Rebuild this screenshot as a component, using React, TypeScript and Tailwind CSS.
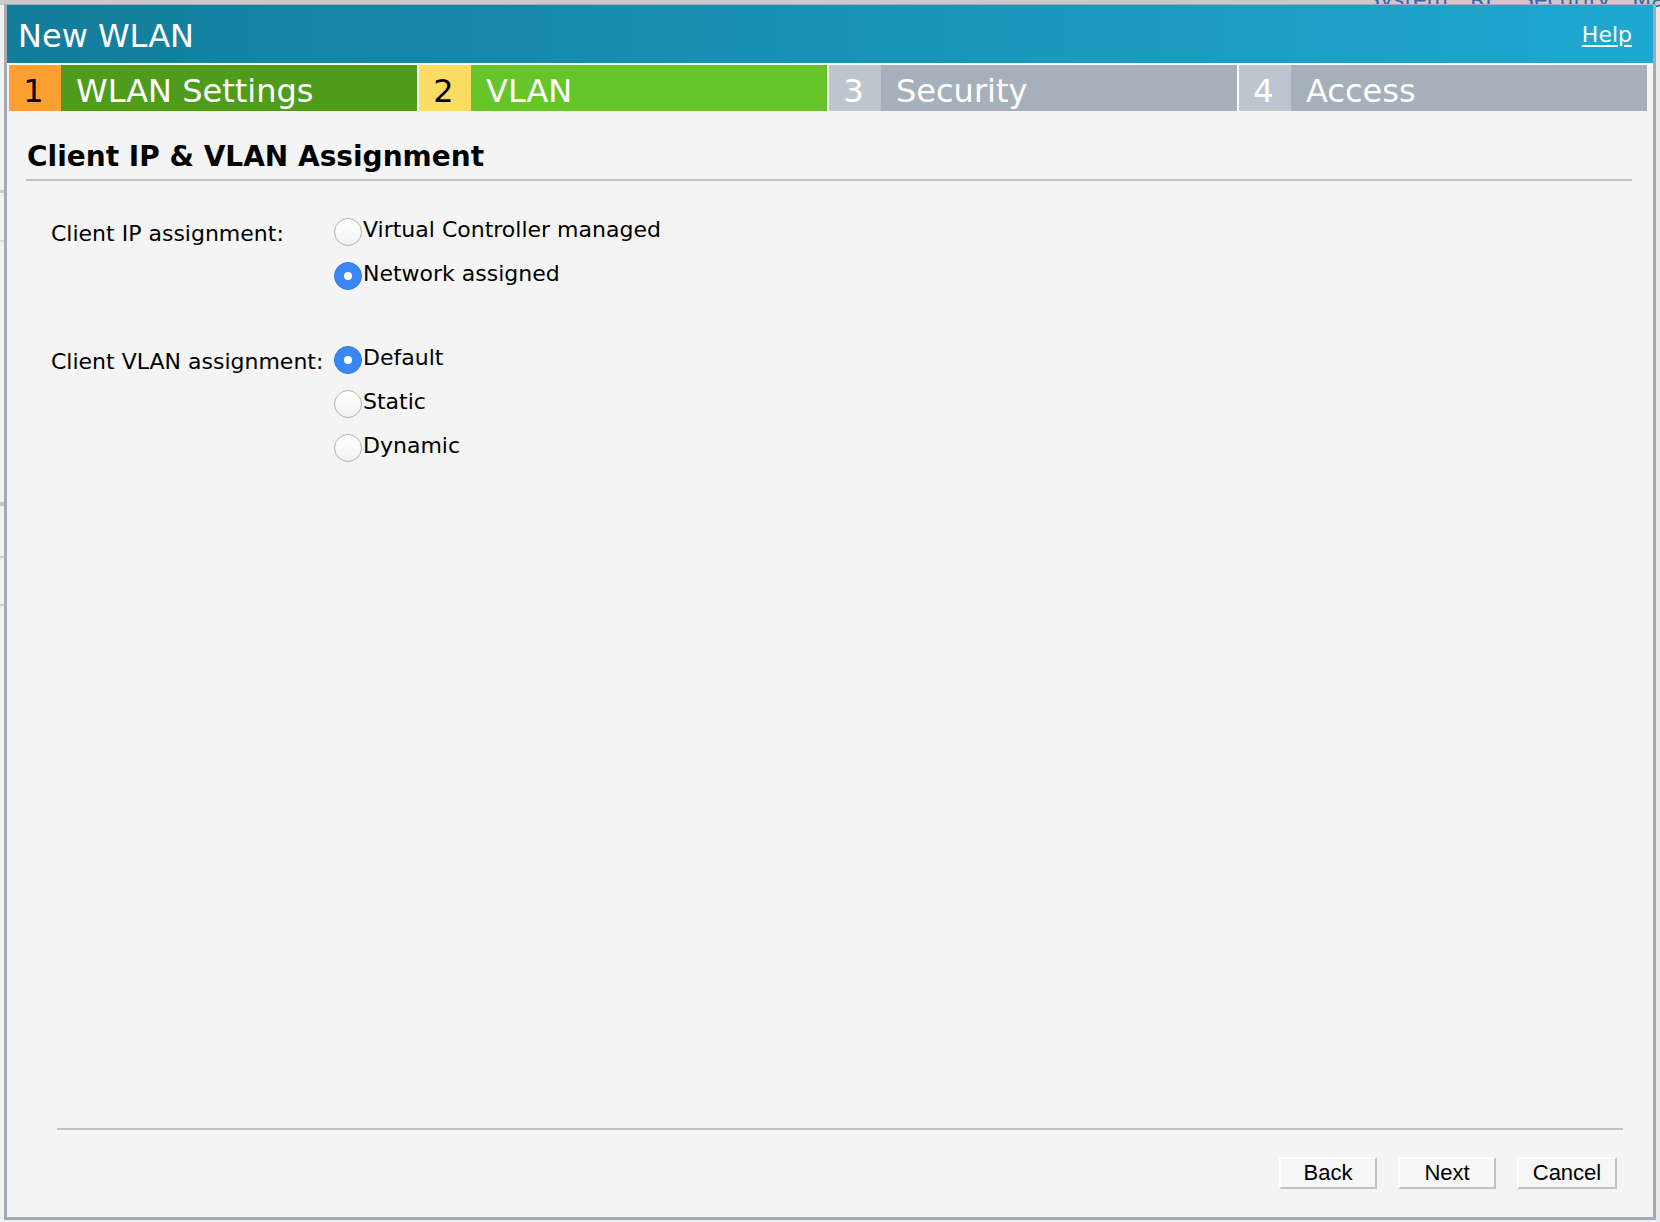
import React from 'react';

const tabs = [
  { n: '1', label: 'WLAN Settings', num: 'bg-[#fe9f31] text-black', body: 'bg-[#4f9b1c] text-white' },
  { n: '2', label: 'VLAN', num: 'bg-[#fddd61] text-black', body: 'bg-[#66c528] text-white' },
  { n: '3', label: 'Security', num: 'bg-[#bdc6cf] text-white', body: 'bg-[#a6b0bb] text-white' },
  { n: '4', label: 'Access', num: 'bg-[#bdc6cf] text-white', body: 'bg-[#a6b0bb] text-white' },
];

const Radio: React.FC<{ checked?: boolean; label: string }> = ({ checked, label }) => (
  <div className="flex h-[44px] items-center">
    {checked ? (
      <span className="flex h-[28px] w-[28px] items-center justify-center rounded-full bg-[#3a87f6] border border-[#3079e8]">
        <span className="h-[8px] w-[8px] rounded-full bg-white" />
      </span>
    ) : (
      <span className="h-[28px] w-[28px] rounded-full border border-[#b3b3b3] bg-linear-to-b from-white to-[#f2f2f2]" />
    )}
    <span className="ml-[1px] mb-[4px] text-[22px] leading-none text-black">{label}</span>
  </div>
);

const Field: React.FC<{ label: string; children: React.ReactNode; className?: string }> = ({ label, children, className }) => (
  <div className={`flex ${className ?? ''}`}>
    <div className="flex h-[44px] w-[283px] items-center pt-[3px] text-[22px] text-black">{label}</div>
    <div className="flex flex-col">{children}</div>
  </div>
);

const Button: React.FC<{ children: React.ReactNode; wide?: boolean }> = ({ children, wide }) => (
  <button
    className={`${wide ? 'w-[100px]' : 'w-[98px]'} h-[32px] bg-[#f6f6f6] border-2 border-t-white border-l-white border-r-[#c2c2c2] border-b-[#c2c2c2] font-['Liberation_Sans',Arial,sans-serif] text-[22px] leading-none text-black`}
  >
    {children}
  </button>
);

export default function App() {
  return (
    <div className="relative h-[1222px] w-[1660px] overflow-hidden bg-[#ececec] font-['DejaVu_Sans',sans-serif]">
      {/* page behind the dialog */}
      <div className="absolute top-0 left-0 right-0 h-[5px] bg-[#cacaca]" />
      <div className="absolute top-[-17px] left-[1366px] flex gap-[22px] text-[22px] text-[#2c6fa7] whitespace-nowrap">
        <span>System</span>
        <span>RF</span>
        <span>Security</span>
        <span>Maintenance</span>
      </div>
      <div className="absolute left-0 top-[5px] bottom-0 w-[4px] bg-[#f2f2f2]">
        <div className="mt-[185px] h-[3px] bg-[#c9c9c9]" />
        <div className="mt-[47px] h-[2px] bg-[#d6d6d6]" />
        <div className="mt-[260px] h-[4px] bg-[#c4c4c4]" />
        <div className="mt-[50px] h-[2px] bg-[#d0d0d0]" />
        <div className="mt-[46px] h-[2px] bg-[#d0d0d0]" />
      </div>

      {/* dialog */}
      <div className="absolute left-[4px] top-[4px] flex h-[1216px] w-[1652px] flex-col border-x-[3px] border-b-[3px] border-t border-[#a3acb5] bg-[#f4f4f4]">
        <div className="flex h-[58px] items-center justify-between bg-linear-to-r from-[#137c9b] to-[#1fa8d1] pl-[11px] pr-[21px] text-white">
          <span className="pt-[4px] text-[32px] leading-none">New WLAN</span>
          <a className="pt-[2px] text-[22px] leading-none underline underline-offset-[3px]">Help</a>
        </div>

        <div className="border-t-2 border-white pl-[2px]">
          <div className="flex h-[46px] w-fit gap-[2px] bg-white">
            {tabs.map((t) => (
              <div key={t.n} className="flex w-[408px]">
                <div className={`flex w-[52px] items-center justify-center pt-[5px] pr-[3px] text-[32px] leading-none ${t.num}`}>{t.n}</div>
                <div className={`flex flex-1 items-center pl-[15px] pt-[5px] text-[32px] leading-none ${t.body}`}>{t.label}</div>
              </div>
            ))}
          </div>
        </div>

        <div className="flex-1">
          <h2 className="mt-[27px] ml-[19px] mr-[21px] border-b-2 border-[#b9c3cd] pb-[4px] pl-[1px] text-[28px] font-bold leading-[37px] text-black">
            Client IP &amp; VLAN Assignment
          </h2>

          <div className="mt-[29px] pl-[44px]">
            <Field label="Client IP assignment:">
              <Radio label="Virtual Controller managed" />
              <Radio checked label="Network assigned" />
            </Field>
            <Field label="Client VLAN assignment:" className="mt-[40px]">
              <Radio checked label="Default" />
              <Radio label="Static" />
              <Radio label="Dynamic" />
            </Field>
          </div>
        </div>

        <div className="ml-[50px] mr-[30px] border-t-2 border-[#b9c3cd]">
          <div className="mt-[27px] mb-[28px] mr-[6px] flex justify-end gap-[21px]">
            <Button>Back</Button>
            <Button>Next</Button>
            <Button wide>Cancel</Button>
          </div>
        </div>
      </div>
    </div>
  );
}
